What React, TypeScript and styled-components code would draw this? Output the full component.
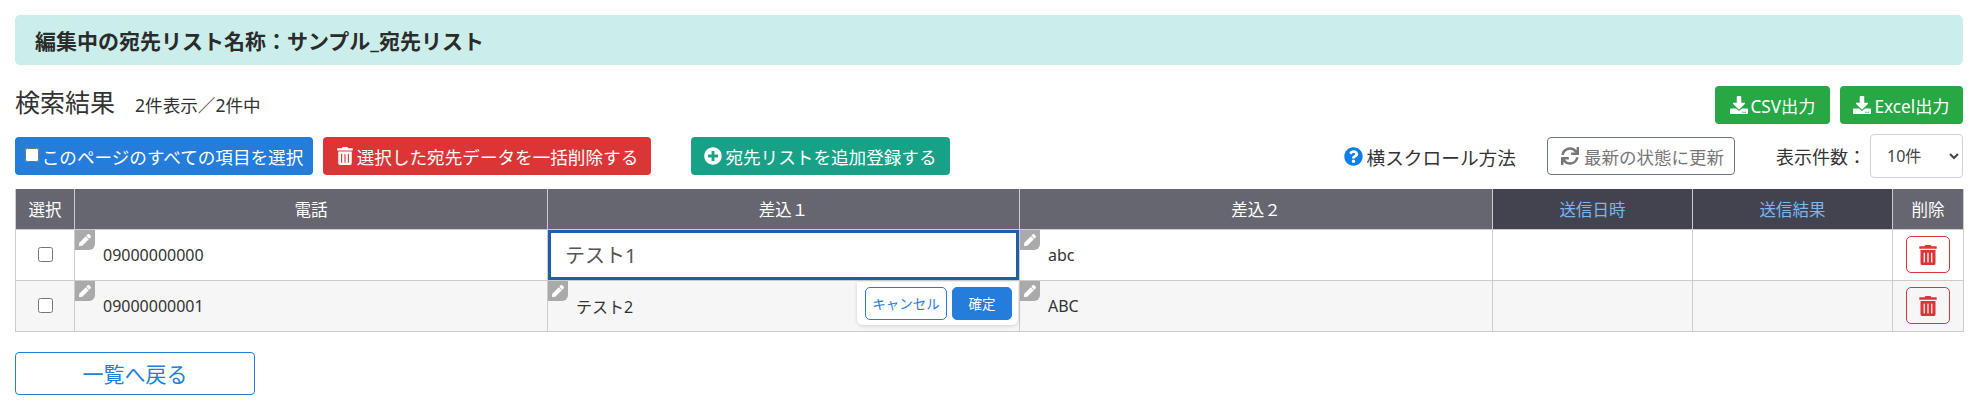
import React from 'react';
import styled, { createGlobalStyle } from 'styled-components';
import { FaDownload, FaPen, FaPlusCircle, FaQuestionCircle, FaSync, FaTrashAlt } from 'react-icons/fa';

const GlobalStyle = createGlobalStyle`
    html, body {
        margin: 0;
        padding: 0;
        background: #fff;
    }
    body {
        font-family: 'Noto Sans', 'Noto Sans CJK JP', sans-serif;
        font-size: 16px;
        color: #333;
    }
`;

const Page = styled.div`
    padding: 15px 13px 0 15px;
`;

const Banner = styled.div`
    height: 50px;
    box-sizing: border-box;
    padding-left: 20px;
    display: flex;
    align-items: center;
    background-color: #cbeeeb;
    border-radius: 5px;
    font-size: 21px;
    font-weight: 700;
    color: #2b2b2b;
`;

const ResultHead = styled.div`
    display: flex;
    justify-content: space-between;
    align-items: center;
    height: 38px;
    margin-top: 21px;
`;

const TitleGroup = styled.div`
    display: flex;
    align-items: baseline;
    gap: 20px;
    margin-bottom: 6px;
`;

const Title = styled.h2`
    margin: 0;
    font-size: 25px;
    line-height: 1.2;
    font-weight: 400;
    color: #333;
`;

const Count = styled.span`
    font-size: 17.6px;
    line-height: 1.2;
    color: #333;
`;

const Row = styled.div`
    display: flex;
    align-items: center;
`;

const ExportGroup = styled(Row)`
    gap: 10px;
`;

const Button = styled.button<{ $bg: string; $width: number }>`
    height: 38px;
    width: ${(p) => p.$width}px;
    box-sizing: border-box;
    padding: 0;
    display: inline-flex;
    align-items: center;
    justify-content: center;
    gap: 3px;
    border: none;
    border-radius: 4px;
    background-color: ${(p) => p.$bg};
    color: #fff;
    font-family: inherit;
    font-size: 17.6px;
    white-space: nowrap;

    svg {
        font-size: 18px;
    }
`;

const ExportButton = styled(Button)`
    font-size: 17.2px;
`;

const Toolbar = styled(Row)`
    height: 44px;
    margin-top: 10px;
`;

const LeftTools = styled(Row)`
    gap: 10px;
`;

const AddButton = styled(Button)`
    margin-left: 40px;
`;

const RightTools = styled(Row)`
    margin-left: auto;
`;

const HelpLink = styled.a`
    display: inline-flex;
    align-items: center;
    gap: 4px;
    font-size: 18.7px;
    color: #333;
    margin-right: 31px;

    svg {
        font-size: 19px;
        color: #0d7de8;
    }
`;

const RefreshButton = styled.button`
    width: 188px;
    height: 38px;
    box-sizing: border-box;
    display: inline-flex;
    align-items: center;
    justify-content: center;
    gap: 5px;
    padding: 0 0 0 3px;
    background: #fff;
    border: 1px solid #6c757d;
    border-radius: 4px;
    color: #777;
    font-family: inherit;
    font-size: 17.5px;

    svg {
        font-size: 18px;
    }
`;

const PageSizeLabel = styled.span`
    margin-left: 41px;
    font-size: 18px;
    color: #333;
    white-space: nowrap;
`;

const PageSizeSelect = styled.select`
    width: 93px;
    height: 44px;
    box-sizing: border-box;
    margin-left: 4px;
    padding-left: 12px;
    background: #fff;
    border: 1px solid #ced4da;
    border-radius: 4px;
    font-family: inherit;
    font-size: 16px;
    color: #444;
`;

const Table = styled.table`
    width: 1948px;
    margin-top: 11px;
    table-layout: fixed;
    border-collapse: collapse;
`;

const Th = styled.th<{ $width: number; $dark?: boolean }>`
    width: ${(p) => p.$width}px;
    height: 40px;
    box-sizing: border-box;
    padding: 0;
    border: 1px solid #ccc;
    border-top: none;
    background-color: ${(p) => (p.$dark ? '#434350' : '#666670')};
    color: ${(p) => (p.$dark ? '#79b6f2' : '#fff')};
    font-size: 16.5px;
    font-weight: 400;
`;

const Tr = styled.tr<{ $even?: boolean }>`
    height: ${(p) => (p.$even ? 51 : 50)}px;
    background-color: ${(p) => (p.$even ? '#f6f6f6' : '#fff')};
`;

const Td = styled.td`
    position: relative;
    box-sizing: border-box;
    padding: 0 0 0 28px;
    border: 1px solid #ccc;
    font-size: 16px;
    color: #333;
    text-align: left;
`;

const CenterTd = styled(Td)`
    padding: 0;
    text-align: center;
`;

const EditTd = styled(Td)`
    padding: 0;
`;

const EditBadge = styled.span`
    position: absolute;
    top: 0;
    left: 0;
    width: 20px;
    height: 20px;
    display: flex;
    align-items: center;
    justify-content: center;
    background-color: #aaa;
    border-bottom-right-radius: 6px;
    color: #fff;
    font-size: 12px;
`;

const EditingInput = styled.input`
    display: block;
    width: 100%;
    height: 50px;
    box-sizing: border-box;
    padding: 0 0 0 14px;
    margin: 0;
    border: 3px solid #1a5fa8;
    outline: none;
    font-family: inherit;
    font-size: 20px;
    color: #555;
`;

const CellText = styled.span`
    padding-left: 28px;
`;

const ConfirmPopup = styled.div`
    position: absolute;
    top: 1px;
    right: 1px;
    z-index: 2;
    display: flex;
    gap: 5px;
    padding: 5px 6px 5px 8px;
    background: #fff;
    border-radius: 0 0 6px 6px;
    box-shadow: 0 1px 4px rgba(0, 0, 0, 0.15);
`;

const PopupButton = styled.button<{ $primary?: boolean }>`
    height: 33px;
    width: ${(p) => (p.$primary ? 60 : 82)}px;
    box-sizing: border-box;
    padding: 0;
    border: 1px solid #247cdb;
    border-radius: 5px;
    background-color: ${(p) => (p.$primary ? '#247cdb' : '#fff')};
    color: ${(p) => (p.$primary ? '#fff' : '#247cdb')};
    font-family: inherit;
    font-size: 13.5px;
    white-space: nowrap;
`;

const DeleteButton = styled.button`
    width: 44px;
    height: 37px;
    box-sizing: border-box;
    padding: 0;
    display: inline-flex;
    align-items: center;
    justify-content: center;
    vertical-align: middle;
    background: transparent;
    border: 1px solid #dc3535;
    border-radius: 5px;
    color: #dc3535;
    font-size: 20px;
`;

const Checkbox = styled.input`
    width: 15px;
    height: 15px;
    margin: 0 0 4px;
    vertical-align: middle;
`;

const ButtonCheckbox = styled(Checkbox)`
    width: 14px;
    height: 14px;
    margin: 0 0 2px 0;
`;

const BackButton = styled.button`
    display: block;
    width: 240px;
    height: 43px;
    margin-top: 20px;
    background: #fff;
    border: 1px solid #247cdb;
    border-radius: 4px;
    color: #247cdb;
    font-family: inherit;
    font-size: 21px;
`;

const rows = [
    { phone: '09000000000', first: '', second: 'abc' },
    { phone: '09000000001', first: 'テスト2', second: 'ABC' },
];

const App: React.FC = () => {
    return (
        <Page>
            <GlobalStyle />
            <Banner>編集中の宛先リスト名称：サンプル_宛先リスト</Banner>
            <ResultHead>
                <TitleGroup>
                    <Title>検索結果</Title>
                    <Count>2件表示／2件中</Count>
                </TitleGroup>
                <ExportGroup>
                    <ExportButton $bg="#28a745" $width={115}>
                        <FaDownload />
                        CSV出力
                    </ExportButton>
                    <ExportButton $bg="#28a745" $width={123}>
                        <FaDownload />
                        Excel出力
                    </ExportButton>
                </ExportGroup>
            </ResultHead>
            <Toolbar>
                <LeftTools>
                    <Button $bg="#247cdb" $width={298}>
                        <ButtonCheckbox type="checkbox" readOnly />
                        このページのすべての項目を選択
                    </Button>
                    <Button $bg="#dc3535" $width={328}>
                        <FaTrashAlt />
                        選択した宛先データを一括削除する
                    </Button>
                </LeftTools>
                <AddButton $bg="#17a288" $width={259}>
                    <FaPlusCircle />
                    宛先リストを追加登録する
                </AddButton>
                <RightTools>
                    <HelpLink>
                        <FaQuestionCircle />
                        横スクロール方法
                    </HelpLink>
                    <RefreshButton>
                        <FaSync />
                        最新の状態に更新
                    </RefreshButton>
                    <PageSizeLabel>表示件数：</PageSizeLabel>
                    <PageSizeSelect defaultValue="10">
                        <option value="10">10件</option>
                    </PageSizeSelect>
                </RightTools>
            </Toolbar>
            <Table>
                <thead>
                    <tr>
                        <Th $width={59}>選択</Th>
                        <Th $width={473}>電話</Th>
                        <Th $width={472}>差込１</Th>
                        <Th $width={473}>差込２</Th>
                        <Th $width={200} $dark>送信日時</Th>
                        <Th $width={200} $dark>送信結果</Th>
                        <Th $width={71}>削除</Th>
                    </tr>
                </thead>
                <tbody>
                    {rows.map((row, i) => (
                        <Tr key={row.phone} $even={i === 1}>
                            <CenterTd>
                                <Checkbox type="checkbox" readOnly />
                            </CenterTd>
                            <Td>
                                <EditBadge><FaPen /></EditBadge>
                                {row.phone}
                            </Td>
                            {i === 0 ? (
                                <EditTd>
                                    <EditingInput defaultValue="テスト1" />
                                </EditTd>
                            ) : (
                                <EditTd>
                                    <EditBadge><FaPen /></EditBadge>
                                    <CellText>{row.first}</CellText>
                                    <ConfirmPopup>
                                        <PopupButton>キャンセル</PopupButton>
                                        <PopupButton $primary>確定</PopupButton>
                                    </ConfirmPopup>
                                </EditTd>
                            )}
                            <Td>
                                <EditBadge><FaPen /></EditBadge>
                                {row.second}
                            </Td>
                            <Td />
                            <Td />
                            <CenterTd>
                                <DeleteButton><FaTrashAlt /></DeleteButton>
                            </CenterTd>
                        </Tr>
                    ))}
                </tbody>
            </Table>
            <BackButton>一覧へ戻る</BackButton>
        </Page>
    );
};

export default App;
